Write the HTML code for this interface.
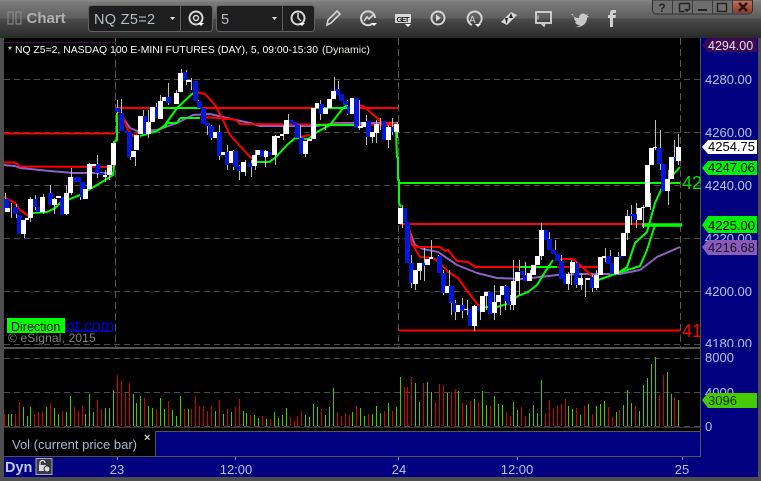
<!DOCTYPE html>
<html><head><meta charset="utf-8"><style>
html,body{margin:0;padding:0;background:#000;width:761px;height:481px;overflow:hidden}
svg{display:block}
text{font-family:"Liberation Sans",sans-serif}
</style></head><body>
<svg width="761" height="481" viewBox="0 0 761 481" xmlns="http://www.w3.org/2000/svg">
<defs>
<linearGradient id="top" x1="0" y1="0" x2="0" y2="1">
<stop offset="0" stop-color="#8a8a8a"/><stop offset=".06" stop-color="#7a7a7a"/><stop offset=".48" stop-color="#5e5e5e"/><stop offset=".5" stop-color="#4a4a4a"/><stop offset="1" stop-color="#2a2a2a"/>
</linearGradient>
<linearGradient id="xb" x1="0" y1="0" x2="0" y2="1"><stop offset="0" stop-color="#c86a58"/><stop offset="1" stop-color="#8a3a2c"/></linearGradient>
</defs>
<rect width="761" height="481" fill="#000"/>
<rect width="761" height="38" fill="url(#top)"/>
<rect x="0" y="38" width="4" height="443" fill="#4e4e4e"/>
<rect x="758" y="38" width="3" height="443" fill="#4e4e4e"/>
<rect x="0" y="477" width="761" height="4" fill="#4e4e4e"/>

<!-- right axis + lower navy -->
<rect x="700" y="38" width="58" height="439" fill="#000080"/>
<rect x="4" y="457" width="754" height="20" fill="#000080"/>
<rect x="155" y="432" width="545" height="25" fill="#000080"/>
<rect x="700" y="38" width="1" height="419" fill="#555"/>
<rect x="155" y="431" width="546" height="1" fill="#555"/>
<rect x="155" y="431" width="1" height="25" fill="#555"/>
<rect x="4" y="456" width="697" height="1" fill="#555"/>
<rect x="4" y="427" width="697" height="1" fill="#333"/>

<!-- grid -->
<path d="M4 79.5H700M4 132.5H700M4 185.5H700M4 238.5H700M4 291.5H700M4 344.5H700M4 358.5H700M4 392.5H700M4 426.5H700" stroke="#4a4a4a" stroke-dasharray="6 4" fill="none"/>
<path d="M115.5 38V347M398.5 38V347M680.5 38V347" stroke="#5a5a5a" stroke-dasharray="7 4" fill="none"/>
<rect x="4" y="42" width="112" height="1" fill="#4a0a4a"/>

<!-- volume -->
<path stroke="#44cc00" fill="none" transform="translate(.5 0)" d="M8 426V414M11 426V414M23 426V407M27 426V416M30 426V407M46 426V407M54 426V408M58 426V414M66 426V412M70 426V396M85 426V414M89 426V394M93 426V412M105 426V408M109 426V408M113 426V390M133 426V394M136 426V403M140 426V396M148 426V406M152 426V408M160 426V398M164 426V409M172 426V410M176 426V416M180 426V396M188 426V409M215 426V411M223 426V414M231 426V412M243 426V411M246 426V413M254 426V415M258 426V418M266 426V419M274 426V412M278 426V418M282 426V415M286 426V408M305 426V415M309 426V417M313 426V404M317 426V407M325 426V415M329 426V407M333 426V388M352 426V412M360 426V408M364 426V416M372 426V414M376 426V406M380 426V413M388 426V403M396 426V407M400 426V377M415 426V383M419 426V402M427 426V382M431 426V392M447 426V393M458 426V391M466 426V405M474 426V399M482 426V391M486 426V405M494 426V396M498 426V404M502 426V405M513 426V402M517 426V410M529 426V413M533 426V405M537 426V413M541 426V380M568 426V406M572 426V409M580 426V415M588 426V404M596 426V406M600 426V404M604 426V401M616 426V412M623 426V405M627 426V390M631 426V403M639 426V411M643 426V385M647 426V378M651 426V364M655 426V357M667 426V372M671 426V394M678 426V400"/>
<path stroke="#d40000" fill="none" transform="translate(.5 0)" d="M4 426V414M15 426V414M19 426V402M34 426V414M38 426V412M42 426V411M50 426V403M62 426V411M74 426V407M78 426V411M82 426V406M97 426V400M101 426V409M117 426V375M121 426V381M125 426V393M129 426V383M144 426V398M156 426V409M168 426V401M184 426V409M191 426V409M195 426V396M199 426V406M203 426V406M207 426V411M211 426V406M219 426V400M227 426V409M235 426V407M239 426V399M250 426V415M262 426V416M270 426V419M290 426V417M294 426V421M297 426V416M301 426V411M321 426V409M337 426V412M341 426V416M345 426V413M349 426V415M356 426V406M368 426V414M384 426V411M392 426V411M404 426V387M407 426V387M411 426V377M423 426V383M435 426V402M439 426V384M443 426V385M451 426V392M455 426V389M462 426V403M470 426V401M478 426V402M490 426V406M506 426V412M510 426V416M521 426V407M525 426V416M545 426V413M549 426V400M553 426V408M557 426V406M561 426V404M565 426V399M576 426V408M584 426V406M592 426V414M608 426V407M612 426V417M619 426V410M635 426V406M659 426V395M663 426V375M674 426V397"/>

<!-- levels and moving averages -->
<g fill="none" stroke-width="2" stroke-linejoin="round">
<path stroke="#9060c8" d="M4 165L15 166L20 168L50 171L73 173L113 173M120 114L123 118L130 128L137 131L157 130L177 123L193 115L210 114L227 118L250 123L260 126L317 126L335 123L398 123M407 228L410 232L415 245L423 249L438 252L457 265L477 273L497 278L523 279L557 275L580 274L620 274L640 270L657 257L680 247"/>
<path stroke="#ff0000" d="M4 133.5H115M115 108H398M400 224H648M399 330.5H680"/>
<path stroke="#ff0000" d="M4 162.5L15 162.5L20 166.5L115 167M4 197L15 203L20 210L27 215L33 217M116 108L123 117L128 130L133 136L140 132M197 92L205 94L215 105L222 118L230 135L240 146L250 157L258 162M203 117L230 119L236 120L240 124L398 125M300 137L310 135M358 105L363 106L370 112L377 118L382 123L397 124M408 222L410 233L412 245L417 247L440 247L445 251L448 250L457 261L468 262L475 267L570 267M411 242L420 257L433 258L440 263L448 272L458 278L468 292L478 305L485 307M560 259L573 259L580 265L593 277L600 280M560 267L598 267"/>
<path stroke="#00ff00" d="M399 183H680M163 108H200M315 108H350M520 267H557M180 118H200M315 125H356"/>
<path stroke="#00ff00" stroke-width="3.5" d="M642 225H682"/>
<path stroke="#00ff00" d="M33 213L47 212L55 208L60 203L80 195L97 185L113 175L114 167L114 142L117 140L117 113M140 136L157 131L165 125L177 108L193 93M165 128L167 123L177 123L180 118M252 162L269 162L275 158L287 145L295 138L308 139L317 132L330 125L343 108L347 105M396 125L396 132L397 157L398 157L398 180L399 180L399 203L401 207M485 307L497 307L507 304L518 296L528 292L537 285L545 272L553 260M598 280L618 273L627 267L635 243L647 232L655 203L662 188L670 178L680 167M618 273L640 266L647 250L655 225"/>
</g>

<!-- wicks -->
<path stroke="#bdbdbd" fill="none" transform="translate(.5 0)" d="M5 193V208M11 203V218M16 204V218M24 220V238M30 197V222M35 195V210M43 194V214M50 185V205M54 198V214M66 185V215M71 168V195M80 180V200M89 163V189M97 155V178M105 170V182M109 165V180M117 100V113M121 99V125M130 155V160M135 157V166M143 110V116M148 110V138M156 103V110M160 95V110M168 83V105M176 90V100M181 69V75M186 70V85M191 78V90M198 100V106M207 124V135M211 125V140M219 125V160M227 145V170M233 150V170M239 165V180M245 160V176M251 160V177M255 150V170M265 150V167M275 135V165M283 125V140M288 114V130M300 125V150M305 150V157M320 100V120M325 125V130M334 77V98M338 81V90M347 100V115M359 100V130M361 122V128M366 115V145M372 135V143M376 120V143M380 118V130M388 125V148M392 118V135M397 122V138M402 205V228M407 222V240M411 255V288M415 273V290M420 265V280M424 248V281M431 240V257M438 255V272M443 270V295M449 270V295M451 298V315M455 300V320M462 298V318M467 300V315M474 305V331M480 300V320M486 293V310M494 285V320M500 292V315M505 285V310M510 295V310M513 260V310M519 260V295M525 262V280M530 270V280M541 223V260M549 232V245M555 240V258M561 255V265M568 272V290M571 260V285M576 262V288M581 273V290M585 278V297M592 275V292M596 270V290M605 248V262M610 250V270M618 252V272M627 210V240M631 205V225M636 203V228M643 205V228M650 193V210M655 120V150M660 130V170M668 170V205M674 140V160M678 134V165"/>

<!-- blue bodies -->
<path fill="#0018dc" d="M4 199h5v13h-5zM13 207h5v7h-5zM17 215h5v19h-5zM32 199h5v8h-5zM36 207h4v5h-4zM48 193h5v12h-5zM60 197h5v18h-5zM72 177h9v5h-9zM80 182h5v15h-5zM95 164h5v9h-5zM99 173h5v2h-5zM115 108h5v4h-5zM119 113h5v18h-5zM124 131h4v2h-4zM127 132h5v25h-5zM142 116h5v18h-5zM154 107h4v11h-4zM166 97h5v6h-5zM182 72h5v9h-5zM193 81h5v20h-5zM197 101h5v7h-5zM201 108h5v16h-5zM205 123h5v3h-5zM209 126h5v12h-5zM217 132h5v24h-5zM225 152h4v13h-4zM233 151h5v16h-5zM237 166h4v5h-4zM248 163h4v4h-4zM260 150h4v7h-4zM268 152h4v3h-4zM288 120h5v3h-5zM292 122h5v3h-5zM295 125h5v13h-5zM299 138h5v16h-5zM319 104h5v10h-5zM335 89h5v6h-5zM339 94h5v7h-5zM343 101h5v4h-5zM347 106h4v8h-4zM354 98h5v30h-5zM366 121h5v16h-5zM382 121h4v19h-4zM390 127h4v5h-4zM402 208h5v14h-5zM405 222h5v41h-5zM409 263h5v20h-5zM421 263h4v3h-4zM437 256h5v17h-5zM441 273h5v20h-5zM449 286h5v17h-5zM453 303h4v9h-4zM460 305h5v6h-5zM468 309h4v17h-4zM476 307h4v4h-4zM488 292h5v22h-5zM504 286h5v15h-5zM507 301h4v4h-4zM519 271h5v4h-5zM523 275h4v6h-4zM543 230h5v10h-5zM547 239h5v11h-5zM551 250h5v4h-5zM555 254h5v7h-5zM559 261h5v18h-5zM563 274h4v10h-4zM574 263h5v22h-5zM590 277h5v11h-5zM606 256h5v8h-5zM610 263h5v11h-5zM617 256h5v2h-5zM629 214h4v2h-4zM633 214h5v6h-5zM657 148h5v16h-5zM661 164h5v27h-5zM672 157h4v4h-4z"/>
<!-- white bodies -->
<path fill="#fff" d="M5 208h5v4h-5zM21 220h5v14h-5zM25 218h4v2h-4zM28 199h5v19h-5zM40 197h5v15h-5zM52 199h5v6h-5zM56 196h5v2h-5zM64 193h5v21h-5zM68 177h5v16h-5zM83 189h5v10h-5zM87 164h5v25h-5zM92 164h4v2h-4zM103 175h4v2h-4zM107 165h5v10h-5zM111 143h5v22h-5zM131 151h5v6h-5zM134 135h5v15h-5zM138 116h5v18h-5zM146 122h5v12h-5zM150 107h5v15h-5zM158 101h5v18h-5zM162 97h4v4h-4zM174 93h5v11h-5zM178 73h5v19h-5zM186 80h5v2h-5zM213 132h4v6h-4zM221 152h4v3h-4zM229 151h4v12h-4zM241 162h5v10h-5zM252 155h5v11h-5zM256 150h4v5h-4zM264 151h4v6h-4zM272 136h5v19h-5zM276 136h4v2h-4zM280 134h4v2h-4zM284 120h5v14h-5zM303 141h5v13h-5zM307 139h5v2h-5zM311 108h5v31h-5zM315 103h4v5h-4zM323 108h5v6h-5zM327 99h5v9h-5zM331 91h5v8h-5zM350 98h4v16h-4zM358 126h5v2h-5zM362 122h4v5h-4zM370 132h5v5h-5zM374 124h5v9h-5zM386 127h5v13h-5zM394 124h5v8h-5zM398 208h5v16h-5zM413 270h5v14h-5zM417 263h5v8h-5zM425 259h5v6h-5zM429 257h4v2h-4zM445 286h4v7h-4zM456 305h4v7h-4zM464 309h4v1h-4zM472 306h5v20h-5zM480 296h5v16h-5zM484 292h4v4h-4zM492 302h5v11h-5zM496 295h5v7h-5zM500 286h4v9h-4zM511 281h5v24h-5zM515 272h5v9h-5zM527 273h5v8h-5zM531 265h5v10h-5zM535 256h5v9h-5zM539 230h5v26h-5zM566 274h4v10h-4zM570 262h5v11h-5zM578 278h5v7h-5zM586 278h4v2h-4zM594 275h5v13h-5zM598 257h5v18h-5zM602 256h4v2h-4zM614 257h5v17h-5zM621 233h5v23h-5zM625 216h5v17h-5zM637 208h5v12h-5zM641 207h4v1h-4zM645 165h5v42h-5zM649 148h5v17h-5zM653 147h4v1h-4zM665 179h5v12h-5zM669 157h5v22h-5zM676 147h5v14h-5z"/>

<!-- chart text -->
<text x="8" y="53" font-size="10.5" fill="#fff" textLength="310" lengthAdjust="spacingAndGlyphs">* NQ Z5=2, NASDAQ 100 E-MINI FUTURES (DAY), 5, 09:00-15:30</text>
<text x="322" y="53" font-size="10.5" fill="#f0e8d8">(Dynamic)</text>
<text x="682" y="189" font-size="18" fill="#00e000">42</text>
<text x="682" y="337" font-size="18" fill="#ff0000">41</text>
<text x="66" y="331" font-size="16" fill="#0000e8">nt.com</text>
<rect x="66" y="331" width="47" height="1" fill="#0000e8"/>
<rect x="7" y="318" width="58" height="15" fill="#00ff00"/>
<text x="11" y="331" font-size="12.5" fill="#000">Direction</text>
<text x="8" y="342" font-size="12" fill="#808080" letter-spacing=".15">© eSignal, 2015</text>

<!-- price axis text -->
<g font-size="13" fill="#b4c4e4">
<text x="705" y="84">4280.00</text>
<text x="705" y="137">4260.00</text>
<text x="705" y="190">4240.00</text>
<text x="705" y="243">4220.00</text>
<text x="705" y="296">4200.00</text>
<text x="705" y="348">4180.00</text>
<text x="705" y="362">8000</text>
<text x="705" y="397">4000</text>
<text x="705" y="431">0</text>
</g>
<rect x="4" y="347" width="697" height="2" fill="#555"/>
<rect x="701" y="347" width="57" height="4" fill="#000080"/>

<path d="M708 38H757V52H708L702 45Z" fill="#3c0a50"/>
<text x="708" y="50" font-size="12.5" fill="#e8dcec">4294.00</text>
<path d="M708 140H757V154H708L702 147Z" fill="#fff"/>
<text x="708" y="151" font-size="13" fill="#000">4254.75</text>
<path d="M708 161H757V175H708L702 168Z" fill="#00f000"/>
<text x="708" y="172" font-size="13" fill="#000">4247.06</text>
<path d="M708 216H757V233H708L702 225Z" fill="#00f000"/>
<text x="708" y="230" font-size="13" fill="#000">4225.00</text>
<path d="M708 240H757V255H708L702 247Z" fill="#8a5cb8"/>
<text x="708" y="252" font-size="13" fill="#1c1030">4216.68</text>
<path d="M708 393H757V408H708L702 400Z" fill="#44cc00"/>
<text x="708" y="405" font-size="13" fill="#0c2800">3096</text>

<!-- bottom strip -->
<rect x="4" y="428" width="151" height="28" fill="#000"/>
<text x="12" y="449" font-size="13" fill="#a8b8d8">Vol (current price bar)</text>
<text x="144" y="441" font-size="11" font-weight="bold" fill="#d0d0d0">×</text>
<path d="M117.5 457V460M235.5 457V460M398.5 457V460M517.5 457V460M682.5 457V460" stroke="#8a8aa8" fill="none"/>
<g font-size="13" fill="#b4c4e4" text-anchor="middle">
<text x="117" y="474">23</text>
<text x="236" y="474">12:00</text>
<text x="399" y="474">24</text>
<text x="517" y="474">12:00</text>
<text x="682" y="474">25</text>
</g>
<text x="5" y="472" font-size="14.5" font-weight="bold" fill="#c0c8e0">Dyn</text>
<rect x="36" y="458.5" width="16" height="16" fill="#3a3a4a" stroke="#aaa"/>
<path d="M40 466v-3a2.5 2.5 0 0 1 5 0" fill="none" stroke="#ddd" stroke-width="1.3"/>
<rect x="39" y="465" width="7" height="6" fill="#ddd"/>
<circle cx="47" cy="469" r="3" fill="#ddd" stroke="#333"/>

<!-- toolbar left -->
<rect x="8" y="12" width="5" height="12" fill="none" stroke="#8e8e8e"/>
<rect x="16" y="12" width="5" height="12" fill="none" stroke="#8e8e8e"/>
<text x="26.5" y="23" font-size="15" font-weight="bold" fill="#b0b0b0">Chart</text>
<rect x="88.5" y="5.5" width="124" height="26" rx="3" fill="#1e1e1e" stroke="#606060"/>
<path d="M180.5 6V31" stroke="#606060"/>
<text x="94" y="24" font-size="14.5" fill="#b4bccc" letter-spacing=".3">NQ Z5=2</text>
<path d="M170 17h5l-2.5 3z" fill="#ddd"/>
<circle cx="196" cy="18" r="6.5" fill="none" stroke="#d8d8d8" stroke-width="2"/>
<circle cx="196" cy="18" r="2.5" fill="none" stroke="#d8d8d8" stroke-width="1.5"/>
<path d="M198 23h6l-3 3z" fill="#fff"/>
<rect x="216.5" y="5.5" width="98" height="26" rx="3" fill="#1e1e1e" stroke="#606060"/>
<path d="M282.5 6V31" stroke="#606060"/>
<text x="221" y="24" font-size="14.5" fill="#b4bccc">5</text>
<path d="M272 17h5l-2.5 3z" fill="#ddd"/>
<circle cx="298" cy="18" r="6.5" fill="none" stroke="#d8d8d8" stroke-width="2"/>
<path d="M298 13v5l3 3" fill="none" stroke="#d8d8d8" stroke-width="1.5"/>
<path d="M299 23h6l-3 3z" fill="#fff"/>

<!-- toolbar icons -->
<g fill="none" stroke="#d4d4d4" stroke-width="2">
<path d="M327 25l1-5 9-9 3 3-9 9z" stroke-width="1.6"/>
<path d="M372 24a7 7 0 1 1 3-6"/>
<path d="M364 21l3-4 2 2 4-4" stroke-width="1.6"/>
<circle cx="438" cy="18" r="6.5"/>
<path d="M479 24a7 7 0 1 0-7 1"/>
<rect x="536" y="12" width="15" height="11" stroke-width="1.8"/>
<path d="M541 23l3 3 1-3" stroke-width="1.5"/>
<path d="M538 15.5v4" stroke-width="1"/>
</g>
<path d="M371 23h6l-3 3z" fill="#fff"/>
<rect x="395" y="14" width="16" height="9" rx="1" fill="#d8d8d8"/>
<text x="396.5" y="22" font-size="7.5" font-weight="bold" fill="#222" textLength="13">GET</text>
<path d="M405 24h6l-3 3z" fill="#fff"/>
<path d="M436 14.5l5 3.5-5 3.5z" fill="#d4d4d4"/>
<text x="469" y="23" font-size="10" fill="#d4d4d4">A</text>
<path d="M475 24h6l-3 3z" fill="#fff"/>
<path d="M501 22l10-10 6 3-10 10z" fill="#d8d8d8"/>
<path d="M505 18h3l-1.5 6zM511 13l-2 5h4z" fill="#222"/>
<path d="M571 14c3 3 5 4 8 4 0-4 4-6 7-3l2-1-1 2 2 0-2 2c0 6-6 10-12 9 2 0 4-1 5-2-3 0-4-1-5-3h2c-2-1-3-2-3-4l2 1c-2-1-3-3-3-5z" fill="#c8c8c8"/>
<path d="M610 27V18h-2v-3h2v-2c0-2 1-3 3-3h3v3h-2c-1 0-1 0-1 1v1h3l-.5 3H613V27z" fill="#d0d0d0"/>

<!-- window buttons -->
<path d="M652.5 0H752.5V10a4 4 0 0 1-4 4H656.5a4 4 0 0 1-4-4Z" fill="#6e6e6e" stroke="#2e2e2e"/>
<path d="M672.5 0V14M692.5 0V14M712.5 0V14M732.5 0V14" stroke="#3a3a3a"/>
<path d="M733 1H752V10a3 3 0 0 1-3 3H733Z" fill="url(#xb)"/>
<text x="662" y="12" font-size="12" font-weight="bold" fill="#222" text-anchor="middle">?</text>
<path d="M679.5 3.5h10v6M679.5 3.5v8h5" fill="none" stroke="#222" stroke-width="1.5"/>
<path d="M684 9h6l-3 3z" fill="#222"/>
<rect x="698" y="9" width="9" height="2" fill="#222"/>
<rect x="717.5" y="3.5" width="9" height="8" fill="none" stroke="#222" stroke-width="1.4"/>
<path d="M739 3l8 8M747 3l-8 8" stroke="#2a1410" stroke-width="2.5"/>
</svg>
</body></html>
